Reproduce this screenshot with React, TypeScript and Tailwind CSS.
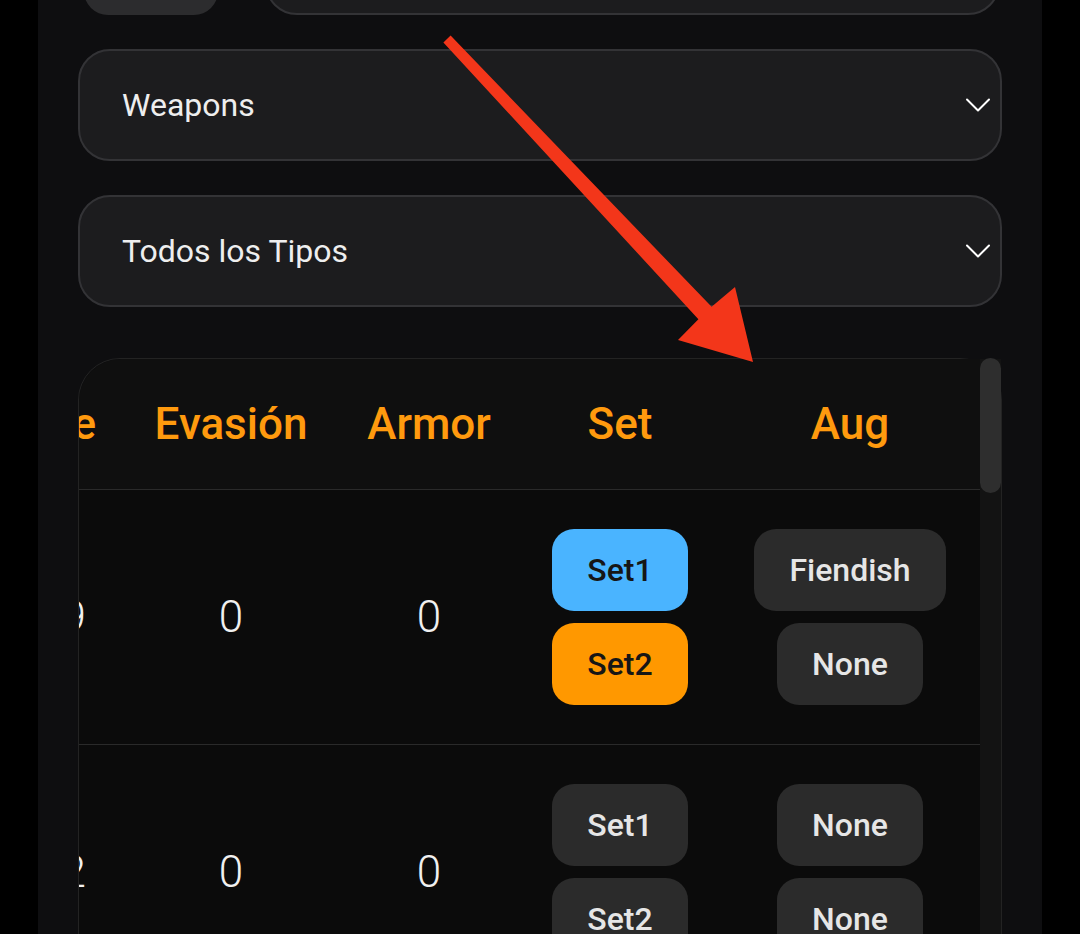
import { ChevronDown } from "lucide-react";

const rows = [
  { base: "1,249", evasion: "0", armor: "0", sets: ["Set1", "Set2"], active: [true, true], augs: ["Fiendish", "None"] },
  { base: "1,212", evasion: "0", armor: "0", sets: ["Set1", "Set2"], active: [false, false], augs: ["None", "None"] },
];

const Select = ({ label }: { label: string }) => (
  <div className="flex h-[112px] items-center justify-between rounded-[32px] border-2 border-[#333336] bg-[#1c1c1e] pl-[42px]">
    <span className="text-[32px] font-normal text-[#eeeeee]">{label}</span>
    <ChevronDown className="h-[44px] w-[44px] text-white" strokeWidth={1.1} />
  </div>
);

const Pill = ({ label, tone }: { label: string; tone: "blue" | "orange" | "gray" }) => {
  const toneClass =
    tone === "blue"
      ? "bg-[#4ab4ff] text-[#161616]"
      : tone === "orange"
      ? "bg-[#ff9800] text-[#161616]"
      : "bg-[#2b2b2b] text-[#e6e6e6]";
  return (
    <div className={`flex h-[82px] items-center justify-center rounded-[22px] px-[35px] text-[32px] font-medium ${toneClass}`}>
      {label}
    </div>
  );
};

export default function App() {
  return (
    <div className="relative h-[934px] overflow-hidden bg-black font-['Roboto',sans-serif]">
      <div className="mx-[38px] flex h-full flex-col bg-[#0e0e10] px-[40px]">
        {/* search row, scrolled mostly out of view */}
        <div className="-mt-[65px] flex h-[80px] shrink-0 gap-[47px] pl-[6px] pr-[2px]">
          <div className="w-[134px] rounded-[24px] bg-[#2c2c2e]" />
          <div className="flex-1 rounded-[32px] border-2 border-[#333336] bg-[#1c1c1e]" />
        </div>

        <div className="mt-[34px] shrink-0">
          <Select label="Weapons" />
        </div>
        <div className="mt-[34px] shrink-0">
          <Select label="Todos los Tipos" />
        </div>

        {/* Table */}
        <div className="mt-[51px] flex shrink-0 rounded-t-[42px] border border-[#232323]">
          <div className="flex-1 overflow-hidden rounded-tl-[42px]">
            <div className="-ml-[147px] w-max">
              <div className="flex h-[131px] items-center border-b border-[#2a2a2a] bg-[#0f0f0f] text-[44px] font-medium text-[#ff9a0e]">
                <div className="w-[200px] pr-[36px] text-right">Defense</div>
                <div className="w-[198px] text-center">Evasión</div>
                <div className="w-[198px] text-center">Armor</div>
                <div className="w-[184px] text-center">Set</div>
                <div className="w-[276px] text-center">Aug</div>
              </div>
              {rows.map((row, i) => (
                <div key={i} className="flex items-center border-b border-[#2a2a2a] bg-[#0b0b0b] py-[39px] text-[44px] font-light text-[#f0f0f0]">
                  <div className="w-[200px] pr-[46px] text-right">{row.base}</div>
                  <div className="w-[198px] text-center">{row.evasion}</div>
                  <div className="w-[198px] text-center">{row.armor}</div>
                  <div className="flex w-[184px] flex-col items-center gap-[12px]">
                    {row.sets.map((s, j) => (
                      <Pill key={s} label={s} tone={row.active[j] ? (j === 0 ? "blue" : "orange") : "gray"} />
                    ))}
                  </div>
                  <div className="flex w-[276px] flex-col items-center gap-[12px]">
                    {row.augs.map((a, j) => (
                      <Pill key={j} label={a} tone="gray" />
                    ))}
                  </div>
                </div>
              ))}
            </div>
          </div>
          {/* scrollbar */}
          <div className="relative w-[21px] bg-[#131313]">
            <div className="absolute -top-px left-0 h-[135px] w-[21px] rounded-full bg-[#2e2e2e]" />
          </div>
        </div>
      </div>

      {/* annotation arrow */}
      <svg className="pointer-events-none absolute inset-0 h-full w-full" viewBox="0 0 1080 934">
        <polygon
          points="450.6,35.6 711.6,306.8 735,287 753,362 678,340 698.4,319.2 443.4,42.4"
          fill="#f3361a"
        />
      </svg>
    </div>
  );
}
